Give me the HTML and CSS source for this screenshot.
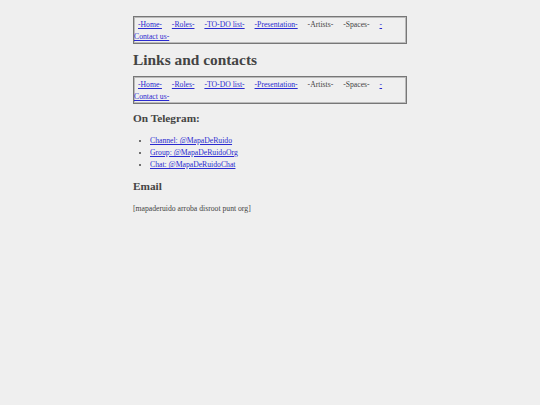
FILE: index.html
```html
<!DOCTYPE html>
<html>
<head>
<meta charset="utf-8">
<link rel="stylesheet" href="styles.css">
</head>
<body>
<div class="page">
  <nav class="menu">
    <a class="item" href="#">-Home-</a> <a class="item" href="#">-Roles-</a> <a class="item" href="#">-TO-DO list-</a> <a class="item" href="#">-Presentation-</a> <span class="item">-Artists-</span> <span class="item">-Spaces-</span> <a class="item last" href="#">-Contact us-</a>
  </nav>
  <h1 class="title">Links and contacts</h1>
  <nav class="menu">
    <a class="item" href="#">-Home-</a> <a class="item" href="#">-Roles-</a> <a class="item" href="#">-TO-DO list-</a> <a class="item" href="#">-Presentation-</a> <span class="item">-Artists-</span> <span class="item">-Spaces-</span> <a class="item last" href="#">-Contact us-</a>
  </nav>
  <h2 class="section first">On Telegram:</h2>
  <ul class="links">
    <li><a href="#">Channel: @MapaDeRuido</a></li>
    <li><a href="#">Group: @MapaDeRuidoOrg</a></li>
    <li><a href="#">Chat: @MapaDeRuidoChat</a></li>
  </ul>
  <h2 class="section">Email</h2>
  <p class="mail">[mapaderuido arroba disroot punt org]</p>
</div>
</body>
</html>
```
FILE: styles.css
```css
html, body {
  margin: 0;
  padding: 0;
  background: #efefef;
}
body {
  font-family: "Liberation Serif", serif;
  font-size: 7.7px;
  line-height: 12px;
  color: #444;
}
.page {
  width: 274px;
  margin: 0 auto;
  padding-top: 16px;
}
.menu {
  display: block;
  border: 1px solid #777;
  box-shadow: inset 0 0 0 1px #bbb;
  padding: 2px 1px 0 0;
}
.item {
  margin: 0 4px;
  color: #444;
}
a.item, .links a {
  color: #2a2ad0;
}
.title {
  font-size: 15.4px;
  line-height: 18px;
  margin: 7px 0 7px;
  font-weight: bold;
}
.section {
  font-size: 11.3px;
  line-height: 14px;
  margin: 8px 0 10px;
}
.section.first {
  margin-top: 7px;
}
.links {
  margin: 0;
  padding-left: 17px;
  list-style: disc;
}
.links li {
  line-height: 12px;
}
.mail {
  margin: 0;
}
```
